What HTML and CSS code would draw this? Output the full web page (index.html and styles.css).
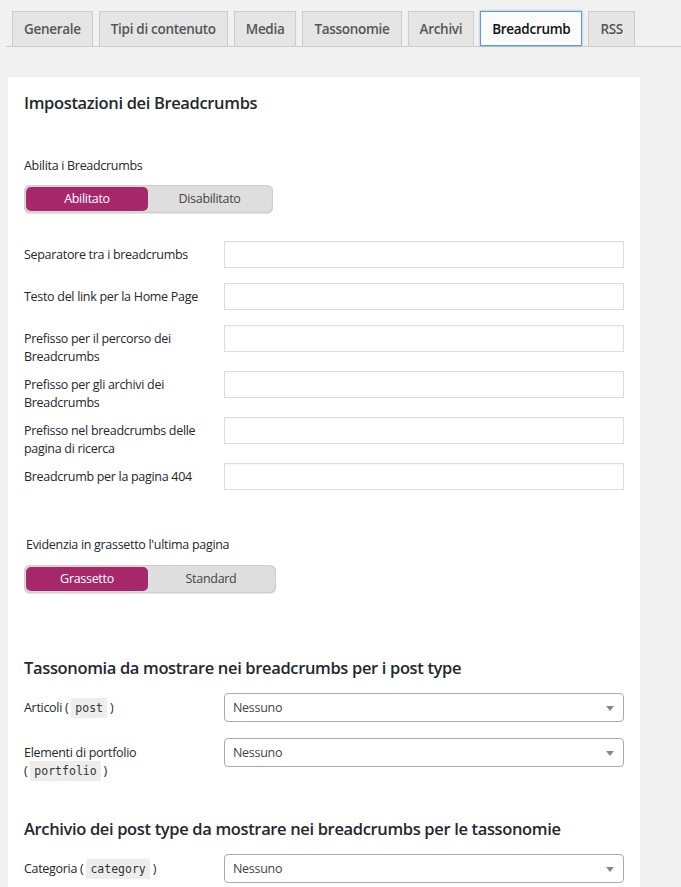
FILE: index.html
```html
<!DOCTYPE html>
<html>

<head>
  <meta charset='utf-8'>
  <title>Impostazioni Breadcrumb</title>
  <link rel="stylesheet" href="styles.css">
</head>

<body>
  <nav class='tabs'>
    <a class='tab'>Generale</a>
    <a class='tab'>Tipi di contenuto</a>
    <a class='tab'>Media</a>
    <a class='tab'>Tassonomie</a>
    <a class='tab'>Archivi</a>
    <a class='tab tab-active'>Breadcrumb</a>
    <a class='tab'>RSS</a>
  </nav>

  <div class='card'>
    <h2 class='title'>Impostazioni dei Breadcrumbs</h2>

    <div class='switch-block'>
      <div class='switch-label'>Abilita i Breadcrumbs</div>
      <div class='switch'>
        <span class='switch-opt switch-on'>Abilitato</span>
        <span class='switch-opt'>Disabilitato</span>
      </div>
    </div>

    <div class='fields'>
      <div class='field'>
        <label class='field-label'>Separatore tra i breadcrumbs</label>
        <input class='text-input' type='text'>
      </div>
      <div class='field'>
        <label class='field-label'>Testo del link per la Home Page</label>
        <input class='text-input' type='text'>
      </div>
      <div class='field field-tall'>
        <label class='field-label'>Prefisso per il percorso dei Breadcrumbs</label>
        <input class='text-input' type='text'>
      </div>
      <div class='field field-tall'>
        <label class='field-label'>Prefisso per gli archivi dei Breadcrumbs</label>
        <input class='text-input' type='text'>
      </div>
      <div class='field field-tall'>
        <label class='field-label'>Prefisso nel breadcrumbs delle pagina di ricerca</label>
        <input class='text-input' type='text'>
      </div>
      <div class='field'>
        <label class='field-label'>Breadcrumb per la pagina 404</label>
        <input class='text-input' type='text'>
      </div>
    </div>

    <div class='switch-block switch-block-2'>
      <div class='switch-label'>Evidenzia in grassetto l'ultima pagina</div>
      <div class='switch switch-wide'>
        <span class='switch-opt switch-on'>Grassetto</span>
        <span class='switch-opt'>Standard</span>
      </div>
    </div>

    <h3 class='subtitle'>Tassonomia da mostrare nei breadcrumbs per i post type</h3>
    <div class='field field-select'>
      <label class='field-label'>Articoli <span class='nowrap'>( <code>post</code> )</span></label>
      <div class='select'>Nessuno</div>
    </div>
    <div class='field field-select field-select-2'>
      <label class='field-label'>Elementi di portfolio <span class='nowrap'>( <code>portfolio</code> )</span></label>
      <div class='select'>Nessuno</div>
    </div>

    <h3 class='subtitle subtitle-2'>Archivio dei post type da mostrare nei breadcrumbs per le tassonomie</h3>
    <div class='field field-select'>
      <label class='field-label'>Categoria <span class='nowrap'>( <code>category</code> )</span></label>
      <div class='select'>Nessuno</div>
    </div>
  </div>
</body>

</html>
```

FILE: styles.css
```css
body {
  margin: 0;
  padding: 0 0 0 8px;
  background-color: #f1f1f1;
  font-family: "Open Sans", sans-serif;
  color: #23282d;
  font-size: 12px;
  overflow: hidden;
}

.tabs {
  display: flex;
  gap: 6px;
  padding: 11px 0 0 6px;
  border-bottom: 1px solid #ccc;
  margin-left: -2px;
}

.tab {
  display: block;
  padding: 0 11px;
  height: 34px;
  line-height: 34px;
  font-size: 13.5px;
  font-weight: 600;
  color: #555;
  background-color: #e5e5e5;
  border: 1px solid #ccc;
  border-bottom: none;
  margin-bottom: -1px;
  letter-spacing: -0.3px;
}

.tab-active {
  background-color: #fbfbfb;
  color: #111;
  border: 1px solid #5b9dd9;
  height: 33px;
  margin-bottom: 0;
  box-shadow: 0 0 2px rgba(30, 140, 190, 0.6);
}

.card {
  margin-top: 30px;
  width: 600px;
  padding: 14px 16px 0 16px;
  background-color: #fff;
  min-height: 820px;
}

.title {
  margin: 0;
  font-size: 16.5px;
  font-weight: 600;
  line-height: 24px;
  letter-spacing: -0.35px;
}

.switch-block {
  margin-top: 42px;
}

.switch-label {
  font-size: 12.5px;
  line-height: 18px;
  letter-spacing: -0.3px;
}

.switch {
  display: flex;
  margin-top: 10px;
  width: 245px;
  height: 24px;
  padding: 2px;
  border-radius: 6px;
  background-color: #dedede;
  box-shadow: inset 0 0 2px rgba(0, 0, 0, 0.25), 0 1px 1px rgba(0, 0, 0, 0.1);
}

.switch-wide {
  width: 248px;
}

.switch-opt {
  flex: 1;
  text-align: center;
  line-height: 24px;
  font-size: 12.5px;
  color: #444;
  letter-spacing: -0.3px;
}

.switch-on {
  flex: 0 0 122px;
  background-color: #a6286a;
  color: #fff;
  border-radius: 5px;
}

.fields {
  margin-top: 28px;
  display: flex;
  flex-direction: column;
  gap: 15px;
}

.field {
  display: flex;
  align-items: flex-start;
  height: 27px;
}

.field-tall {
  margin-bottom: 4px;
}

.field-label {
  flex: 0 0 190px;
  margin-right: 10px;
  font-size: 12.5px;
  line-height: 18px;
  padding-top: 5px;
  letter-spacing: -0.3px;
}

.nowrap {
  white-space: nowrap;
}

.text-input {
  box-sizing: border-box;
  width: 400px;
  height: 27px;
  margin: 0;
  border: 1px solid #ddd;
  border-radius: 0;
  background: #fff;
  box-shadow: inset 0 1px 2px rgba(0, 0, 0, 0.04);
}

.switch-block-2 {
  margin-top: 46px;
  padding-left: 2px;
}

.switch-block-2 .switch {
  margin-left: -2px;
  margin-top: 11px;
}

.subtitle {
  margin: 63px 0 0 0;
  font-size: 16.5px;
  font-weight: 600;
  line-height: 24px;
  letter-spacing: -0.35px;
}

.subtitle-2 {
  margin-top: 50px;
}

.field-select {
  height: 29px;
  margin-top: 13px;
}

.field-select-2 {
  margin-top: 16px;
}

.field-select .field-label {
  padding-top: 6px;
}

code {
  font-family: "DejaVu Sans Mono", monospace;
  font-size: 11.5px;
  background-color: #ededed;
  padding: 3px 4px;
  letter-spacing: 0;
  color: #333;
}

.select {
  box-sizing: border-box;
  position: relative;
  width: 400px;
  height: 29px;
  line-height: 27px;
  padding-left: 8px;
  border: 1px solid #aaa;
  border-radius: 4px;
  font-size: 12.5px;
  color: #444;
  letter-spacing: -0.3px;
}

.select::after {
  content: '';
  position: absolute;
  right: 9px;
  top: 12px;
  border-left: 4px solid transparent;
  border-right: 4px solid transparent;
  border-top: 5px solid #888;
}
```
